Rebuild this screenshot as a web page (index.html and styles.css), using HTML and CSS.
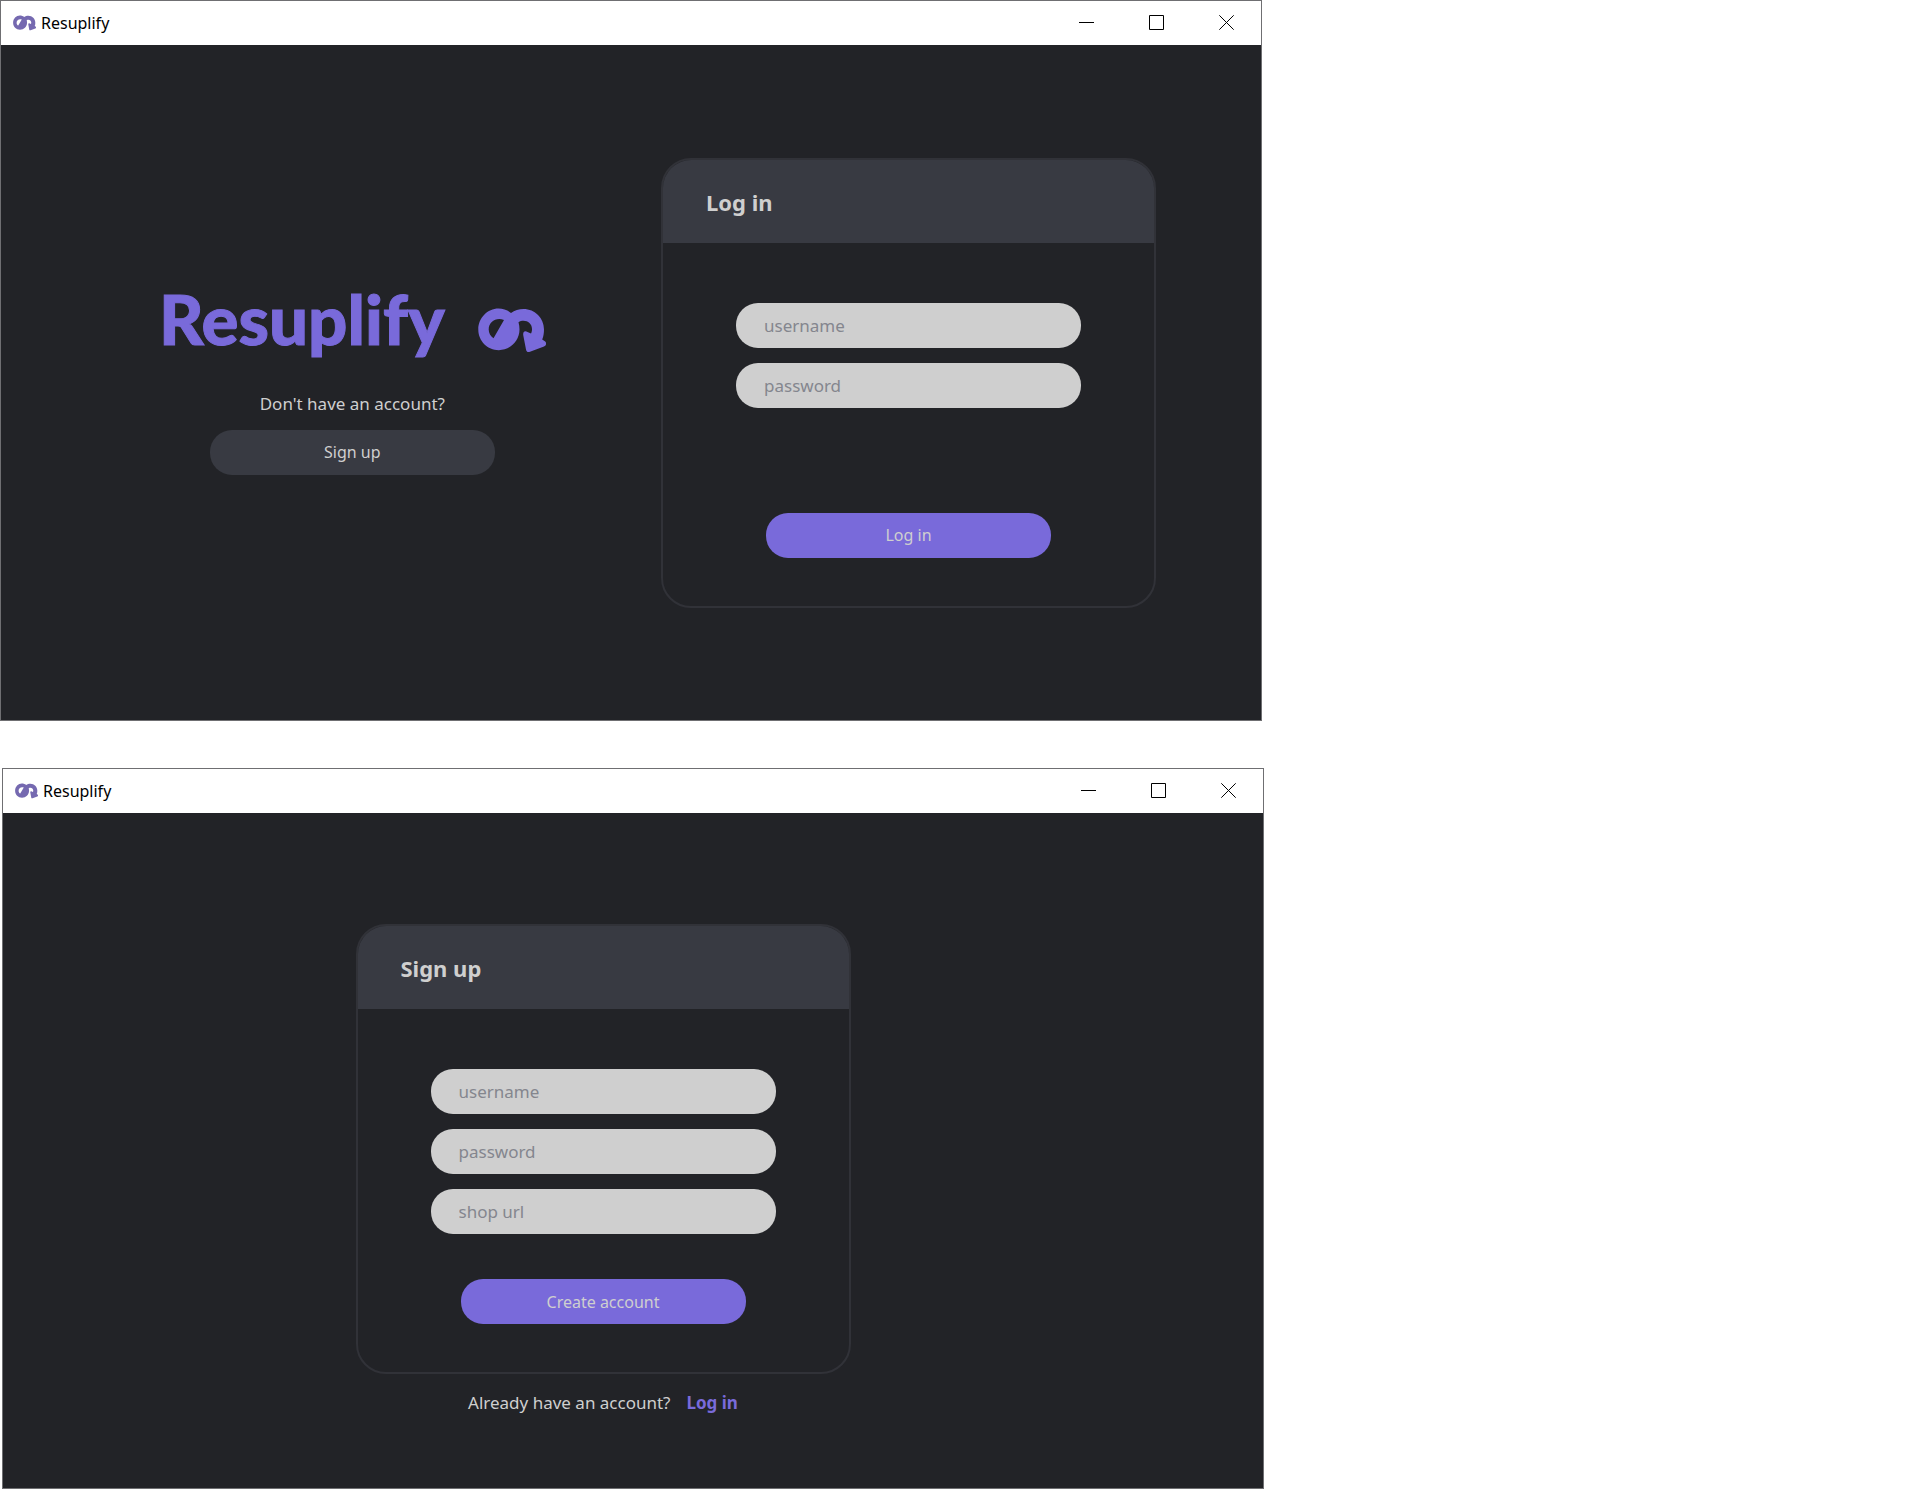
FILE: index.html
```html
<!DOCTYPE html>
<html lang="en">
<head>
  <meta charset="utf-8">
  <title>Resuplify</title>
  <link rel="stylesheet" href="styles.css">
</head>
<body>
  <svg class="symbols" aria-hidden="true">
    <symbol id="mark" viewBox="0 0 68 45">
      <path fill-rule="evenodd" d="M20.5 0.5C25 0.5 29.500 2 33 5C36.500 2.200 41 1 45.500 1C57 1 66 10.200 66 21.500C66 25 65.500 28.500 64.200 31.500L66.500 33C69 34.500 68.500 37.500 66 38.500L52 43.800C49.500 44.600 48.300 43.500 48 41.500L45.200 27C44.900 23.500 47 22.500 49.500 24L53 25.500C53.800 24 54 22.500 54 21C54 16 50 12.800 45.500 12.800C43.700 12.800 42 13.300 40.500 14.200C41.200 16.500 41.500 19 41.500 21.500C41.500 33 32 42.200 20.800 42.200C9.500 42.200 0.300 33 0.300 21.500C0.300 10 9.500 0.500 20.500 0.500ZM26 12C18 9 10.700 14 10.700 21.500C10.700 25 12.500 28.500 15.500 30.200Z"/>
    </symbol>
    <symbol id="minimize" viewBox="0 0 15 15"><path d="M0 7.500H15"/></symbol>
    <symbol id="maximize" viewBox="0 0 15 15"><path d="M0.500 0.500H14.500V14.500H0.500Z"/></symbol>
    <symbol id="close" viewBox="0 0 15 15"><path d="M0.300 0.300L14.700 14.700M14.700 0.300L0.300 14.700"/></symbol>
  </svg>

  <main class="desktop">
    <section class="window" aria-label="Log in window">
      <header class="titlebar">
        <svg class="titlebar-icon" aria-hidden="true"><use href="#mark"/></svg>
        <span class="titlebar-name">Resuplify</span>
        <div class="controls">
          <button class="control" type="button" aria-label="Minimize"><svg><use href="#minimize"/></svg></button>
          <button class="control" type="button" aria-label="Maximize"><svg><use href="#maximize"/></svg></button>
          <button class="control" type="button" aria-label="Close"><svg><use href="#close"/></svg></button>
        </div>
      </header>
      <div class="view view-login">
        <div class="intro">
          <div class="brand">
            <h1 class="brand-name">Resuplify</h1>
            <svg class="brand-mark" aria-hidden="true"><use href="#mark"/></svg>
          </div>
          <p class="hint">Don't have an account?</p>
          <button class="pill pill-muted" type="button">Sign up</button>
        </div>
        <form class="card">
          <h2 class="card-title">Log in</h2>
          <div class="card-body">
            <input class="field" type="text" placeholder="username" aria-label="username">
            <input class="field" type="password" placeholder="password" aria-label="password">
            <button class="pill pill-primary" type="button">Log in</button>
          </div>
        </form>
      </div>
    </section>

    <section class="window window-signup" aria-label="Sign up window">
      <header class="titlebar">
        <svg class="titlebar-icon" aria-hidden="true"><use href="#mark"/></svg>
        <span class="titlebar-name">Resuplify</span>
        <div class="controls">
          <button class="control" type="button" aria-label="Minimize"><svg><use href="#minimize"/></svg></button>
          <button class="control" type="button" aria-label="Maximize"><svg><use href="#maximize"/></svg></button>
          <button class="control" type="button" aria-label="Close"><svg><use href="#close"/></svg></button>
        </div>
      </header>
      <div class="view view-signup">
        <form class="card">
          <h2 class="card-title">Sign up</h2>
          <div class="card-body">
            <input class="field" type="text" placeholder="username" aria-label="username">
            <input class="field" type="password" placeholder="password" aria-label="password">
            <input class="field" type="text" placeholder="shop url" aria-label="shop url">
            <button class="pill pill-primary" type="button">Create account</button>
          </div>
        </form>
        <p class="hint hint-row">Already have an account? <a class="link" href="#">Log in</a></p>
      </div>
    </section>
  </main>
</body>
</html>
```
FILE: styles.css
```css
:root {
  --ink: #222327;
  --panel: #383a42;
  --line: #313238;
  --light: #cfcfcf;
  --accent: #796ada;
}

* {
  box-sizing: border-box;
}

body {
  margin: 0;
  background: #fff;
  color: var(--light);
  font: 17px/24px "Noto Sans", "Open Sans", sans-serif;
}

h1, h2, p {
  margin: 0;
}

button, input {
  font: inherit;
  border: 0;
}

.symbols {
  display: none;
}

.desktop {
  display: flex;
  flex-direction: column;
  gap: 47px;
}

.window {
  width: 100%;
  max-width: 1262px;
  border: 1px solid #6f6f72;
  background: var(--ink);
}

.window-signup {
  margin-left: 2px;
}

.titlebar {
  display: flex;
  align-items: center;
  height: 44px;
  padding-left: 12px;
  background: #fff;
  color: #000;
}

.titlebar-icon {
  width: 23px;
  height: 16px;
  margin-right: 5px;
  fill: #7569b0;
}

.titlebar-name {
  font-size: 16px;
}

.controls {
  display: flex;
  gap: 1px;
  height: 43px;
  align-self: flex-start;
  margin-left: auto;
}

.control {
  display: flex;
  align-items: center;
  justify-content: center;
  width: 69px;
  padding: 0;
  background: none;
}

.control svg {
  width: 15px;
  height: 15px;
  fill: none;
  stroke: #000;
}

.view {
  display: flex;
  min-height: 675px;
}

.view-login {
  align-items: center;
  justify-content: space-between;
  padding: 0 105px 0 158px;
}

.view-signup {
  flex-direction: column;
  align-items: center;
  gap: 17px;
  padding: 111px 60px 0 0;
}

.intro {
  display: flex;
  flex-direction: column;
  align-items: center;
}

.brand {
  display: flex;
  align-items: flex-start;
  gap: 33px;
  margin-bottom: 39px;
}

.brand-name {
  color: var(--accent);
  font: 900 69px/56px Lato, sans-serif;
  -webkit-text-stroke: 1px var(--accent);
}

.brand-mark {
  width: 68px;
  height: 45px;
  margin-top: 17px;
  fill: var(--accent);
}

.pill {
  width: 285px;
  height: 45px;
  border-radius: 22px;
  color: var(--light);
  font-size: 16px;
}

.pill-muted {
  margin-top: 14px;
  background: var(--panel);
}

.pill-primary {
  margin-top: auto;
  background: var(--accent);
}

.card {
  display: flex;
  flex-direction: column;
  width: 495px;
  min-height: 450px;
  border: 2px solid var(--line);
  border-radius: 30px;
  overflow: hidden;
}

.card-title {
  padding: 28px 43px 27px;
  background: var(--panel);
  font-size: 22px;
  font-weight: 700;
  line-height: 28px;
}

.card-body {
  display: flex;
  flex: 1;
  flex-direction: column;
  align-items: center;
  gap: 15px;
  padding: 60px 0 48px;
}

.field {
  width: 345px;
  height: 45px;
  padding: 0 28px;
  border-radius: 22px;
  background: var(--light);
}

.field::placeholder {
  color: #84868e;
  opacity: 1;
}

.hint-row {
  display: flex;
  gap: 16px;
}

.link {
  color: var(--accent);
  font-weight: 700;
  text-decoration: none;
}
```
